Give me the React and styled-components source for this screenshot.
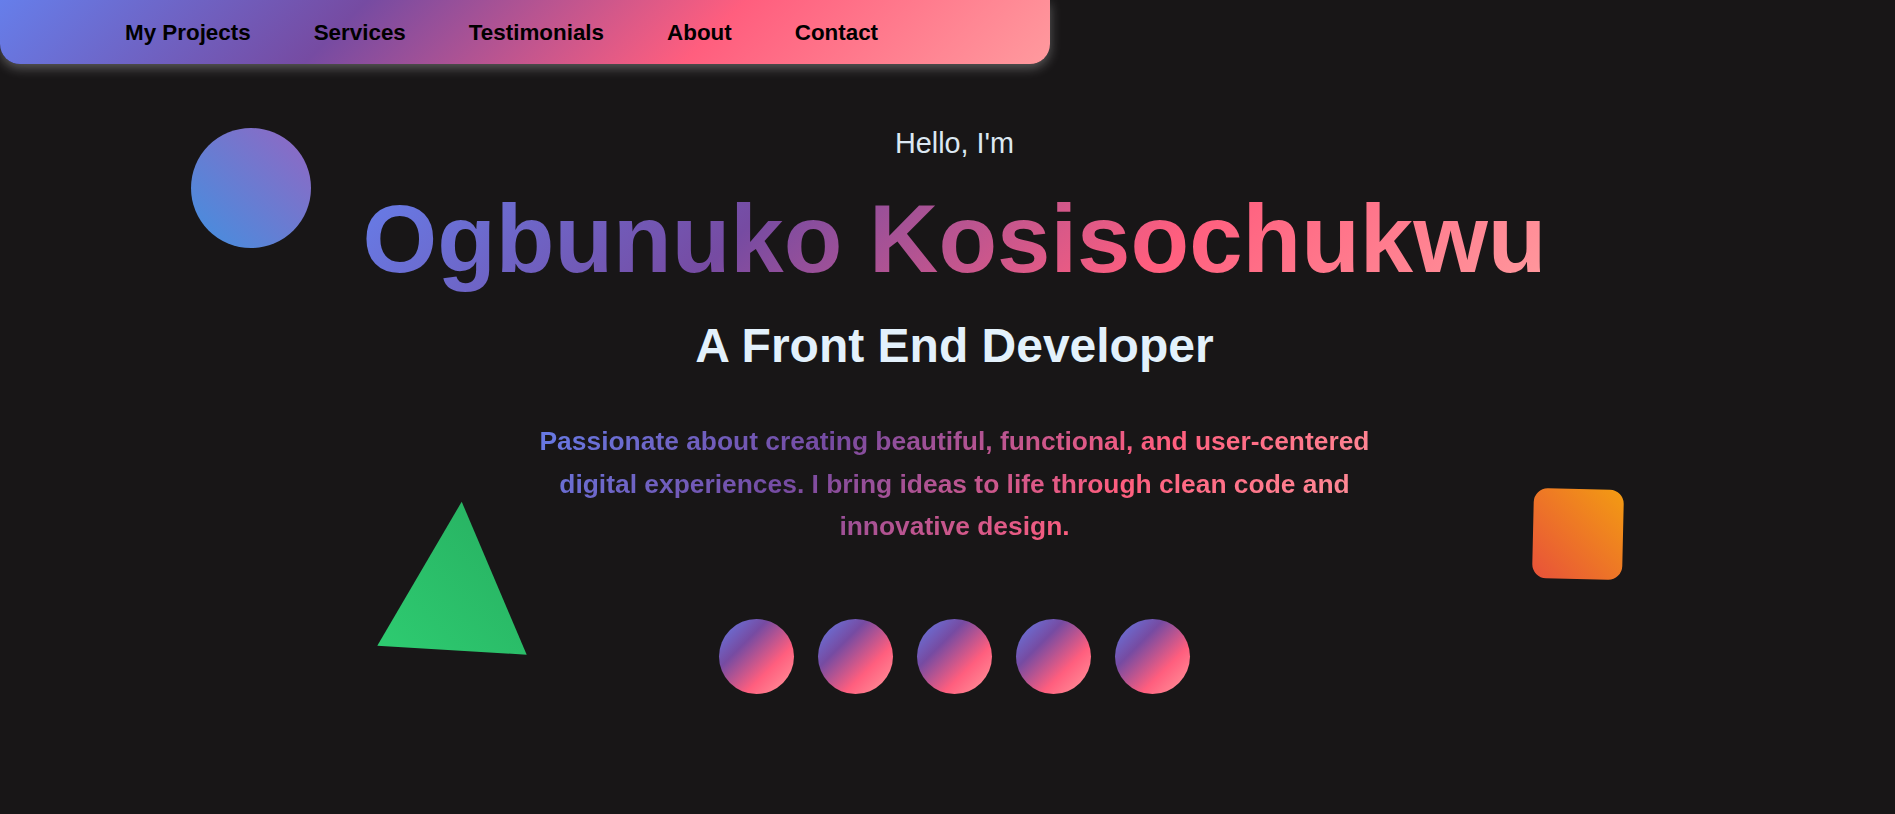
import styled, { createGlobalStyle } from 'styled-components';

const brand = 'linear-gradient(135deg, #667eea 0%, #764ba2 33%, #ff5e7e 67%, #ff9a9e 100%)';

const GlobalStyle = createGlobalStyle`
  html, body {
    margin: 0;
    padding: 0;
    background: #181617;
    overflow: hidden;
  }
  body {
    font-family: "Liberation Sans", Arial, sans-serif;
  }
`;

const Page = styled.div`
  position: relative;
  width: 1895px;
  height: 814px;
  background: #181617;
  overflow: hidden;
`;

const Nav = styled.nav`
  display: flex;
  align-items: center;
  gap: 63px;
  width: 1050px;
  height: 64px;
  box-sizing: border-box;
  padding: 2px 0 0 125px;
  background: ${brand};
  border-radius: 0 0 20px 20px;
  box-shadow: 0 4px 12px rgba(255, 255, 255, 0.3);
  position: relative;
  z-index: 2;
`;

const NavLink = styled.a`
  color: #000;
  font-size: 22.4px;
  font-weight: 700;
  text-decoration: none;
  line-height: 1;
`;

const Hero = styled.section`
  display: flex;
  flex-direction: column;
  align-items: center;
  text-align: center;
  padding: 63px 0 0 14px;
  position: relative;
  z-index: 1;
`;

const Greeting = styled.p`
  margin: 0;
  font-size: 28.8px;
  line-height: 33px;
  color: #dce8f2;
`;

const Name = styled.h1`
  margin: 24px 0 0;
  font-size: 96px;
  line-height: 110px;
  font-weight: 700;
  background: ${brand};
  -webkit-background-clip: text;
  background-clip: text;
  color: transparent;
`;

const Role = styled.h2`
  margin: 24px 0 0;
  font-size: 48px;
  line-height: 55px;
  font-weight: 700;
  color: #e3f1fc;
`;

const Intro = styled.p`
  margin: 47px 0 0;
  max-width: 860px;
  font-size: 26.4px;
  line-height: 42.5px;
  font-weight: 700;
  background: ${brand};
  -webkit-background-clip: text;
  background-clip: text;
  color: transparent;
`;

const Socials = styled.div`
  display: flex;
  gap: 24px;
  margin-top: 71px;
`;

const SocialLink = styled.a`
  display: block;
  width: 75px;
  height: 75px;
  border-radius: 50%;
  background: ${brand};
`;

const Shape = styled.div`
  position: absolute;
  left: ${(p) => p.$x}px;
  top: ${(p) => p.$y}px;
  z-index: 0;
`;

const Bubble = styled(Shape)`
  width: 120px;
  height: 120px;
  border-radius: 50%;
  background: linear-gradient(45deg, #4290e0, #9366c2);
`;

const Square = styled(Shape)`
  width: 90px;
  height: 90px;
  border-radius: 14px;
  background: linear-gradient(45deg, #e8513a, #f39c12);
  transform: rotate(1.3deg);
`;

const links = ['My Projects', 'Services', 'Testimonials', 'About', 'Contact'];

export default function App() {
  return (
    <Page>
      <GlobalStyle />
      <Nav>
        {links.map((l) => (
          <NavLink key={l} href="#">{l}</NavLink>
        ))}
      </Nav>

      <Bubble $x={191} $y={128} />
      <Shape $x={377} $y={501}>
        <svg width="150" height="155" viewBox="0 0 150 155">
          <defs>
            <linearGradient id="tri" x1="0" y1="1" x2="1" y2="0">
              <stop offset="0" stopColor="#2ecc71" />
              <stop offset="1" stopColor="#27ae60" />
            </linearGradient>
          </defs>
          <polygon points="84.7,0.7 0.3,144.7 149.7,153.7" fill="url(#tri)" />
        </svg>
      </Shape>
      <Square $x={1533} $y={489} />

      <Hero>
        <Greeting>Hello, I'm</Greeting>
        <Name>Ogbunuko Kosisochukwu</Name>
        <Role>A Front End Developer</Role>
        <Intro>
          Passionate about creating beautiful, functional, and user-centered digital
          experiences. I bring ideas to life through clean code and innovative design.
        </Intro>
        <Socials>
          {[0, 1, 2, 3, 4].map((i) => (
            <SocialLink key={i} href="#" aria-label={`social ${i + 1}`} />
          ))}
        </Socials>
      </Hero>
    </Page>
  );
}
